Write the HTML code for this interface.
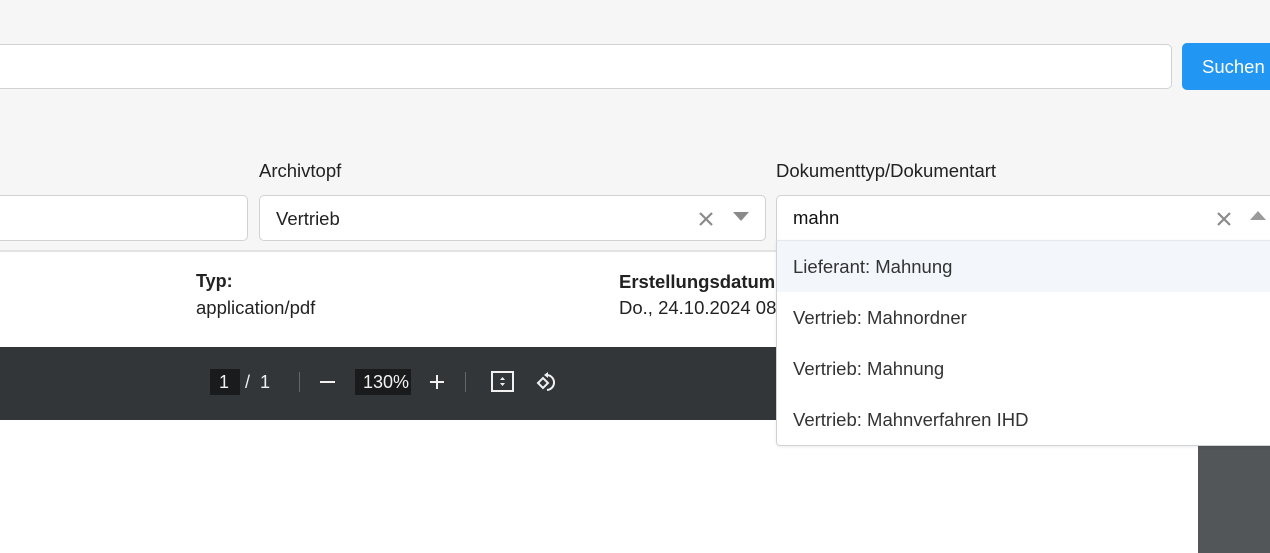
<!DOCTYPE html>
<html><head><meta charset="utf-8"><style>
*{box-sizing:border-box;margin:0;padding:0}
body{width:1270px;height:553px;overflow:hidden;position:relative;background:#fff;font-family:"Liberation Sans",Arial,sans-serif;color:#222}
.abs{position:absolute}
.top{left:0;top:0;width:1270px;height:252px;background:#f5f6f5;border-bottom:2px solid #e2e4e4}
.inp{background:#fff;border:1px solid #cfd3d6;border-radius:5px}
.btn{left:1182px;top:43px;width:100px;height:47px;background:#2196f3;border-radius:5px;color:#fff;font-size:18.5px;line-height:47px;padding-left:20px}
.lbl{font-size:18.5px;color:#222}
.txt{font-size:18.5px;color:#222}
.dd{left:776px;top:240px;width:500px;height:206px;background:#fff;border:1px solid #cfd3d6;border-top:1px solid #e6e8ea;border-radius:0 0 4px 4px;box-shadow:0 1px 3px rgba(0,0,0,.08)}
.it{height:51px;line-height:51px;padding-left:16px;font-size:18.5px;color:#333}
.tb{left:0;top:347px;width:1270px;height:73px;background:#323639}
.w{color:#f1f1f1;font-size:18px}
</style></head><body>
<div class="abs top"></div>
<div class="abs inp" style="left:-10px;top:44px;width:1182px;height:45px"></div>
<div class="abs btn">Suchen</div>

<div class="abs lbl" style="left:259px;top:160px">Archivtopf</div>
<div class="abs lbl" style="left:776px;top:160px">Dokumenttyp/Dokumentart</div>

<div class="abs inp" style="left:-10px;top:195px;width:258px;height:46px"></div>
<div class="abs inp" style="left:259px;top:195px;width:507px;height:46px"></div>
<div class="abs txt" style="left:276px;top:208px">Vertrieb</div>
<svg class="abs" style="left:698px;top:211px" width="16" height="16"><path d="M2 2L14 14M14 2L2 14" stroke="#8a8a8a" stroke-width="2.2"/></svg>
<svg class="abs" style="left:733px;top:212px" width="16" height="10"><path d="M0 0H16L8 9Z" fill="#8a8a8a"/></svg>

<div class="abs inp" style="left:776px;top:195px;width:510px;height:46px;border-radius:5px 5px 0 0"></div>
<div class="abs txt" style="left:793px;top:207px;color:#111">mahn</div>
<svg class="abs" style="left:1216px;top:211px" width="16" height="16"><path d="M2 2L14 14M14 2L2 14" stroke="#8a8a8a" stroke-width="2.2"/></svg>
<svg class="abs" style="left:1250px;top:211px" width="16" height="10"><path d="M0 9H16L8 0Z" fill="#9a9a9a"/></svg>

<div class="abs" style="left:196px;top:271px;font-size:18px;font-weight:bold;color:#222">Typ:</div>
<div class="abs txt" style="left:196px;top:297px">application/pdf</div>
<div class="abs" style="left:619px;top:271px;font-size:18.5px;font-weight:bold;color:#222">Erstellungsdatum:</div>
<div class="abs txt" style="left:619px;top:297px">Do., 24.10.2024 08</div>

<div class="abs tb"></div>
<div class="abs" style="left:210px;top:369px;width:30px;height:26px;background:#191b1c"></div>
<div class="abs w" style="left:219px;top:372px">1</div>
<div class="abs w" style="left:245px;top:372px">/</div>
<div class="abs w" style="left:260px;top:372px">1</div>
<div class="abs" style="left:299px;top:372px;width:1px;height:20px;background:#666"></div>
<div class="abs" style="left:320px;top:381px;width:15px;height:2px;background:#f1f1f1"></div>
<div class="abs" style="left:355px;top:369px;width:56px;height:26px;background:#191b1c"></div>
<div class="abs w" style="left:363px;top:372px">130%</div>
<svg class="abs" style="left:429px;top:374px" width="16" height="16"><path d="M8 1V15M1 8H15" stroke="#f1f1f1" stroke-width="2"/></svg>
<div class="abs" style="left:465px;top:372px;width:1px;height:20px;background:#666"></div>
<svg class="abs" style="left:491px;top:371px" width="24" height="22"><rect x="1" y="1" width="21" height="19" fill="none" stroke="#f1f1f1" stroke-width="2"/><path d="M9 9L11.5 6L14 9ZM9 12L11.5 15L14 12Z" fill="#f1f1f1"/></svg>
<svg class="abs" style="left:535px;top:370px" width="24" height="24"><path d="M3 13L8 8L13 13L8 18Z" fill="none" stroke="#f1f1f1" stroke-width="2"/><path d="M11 5A7 7 0 1 1 12 20" fill="none" stroke="#f1f1f1" stroke-width="2"/><path d="M9 5L13 2V8Z" fill="#f1f1f1"/></svg>

<div class="abs" style="left:1198px;top:420px;width:72px;height:133px;background:#525659"></div>

<div class="abs dd">
<div class="it" style="background:#f3f7fb">Lieferant: Mahnung</div>
<div class="it">Vertrieb: Mahnordner</div>
<div class="it">Vertrieb: Mahnung</div>
<div class="it">Vertrieb: Mahnverfahren IHD</div>
</div>
</body></html>
